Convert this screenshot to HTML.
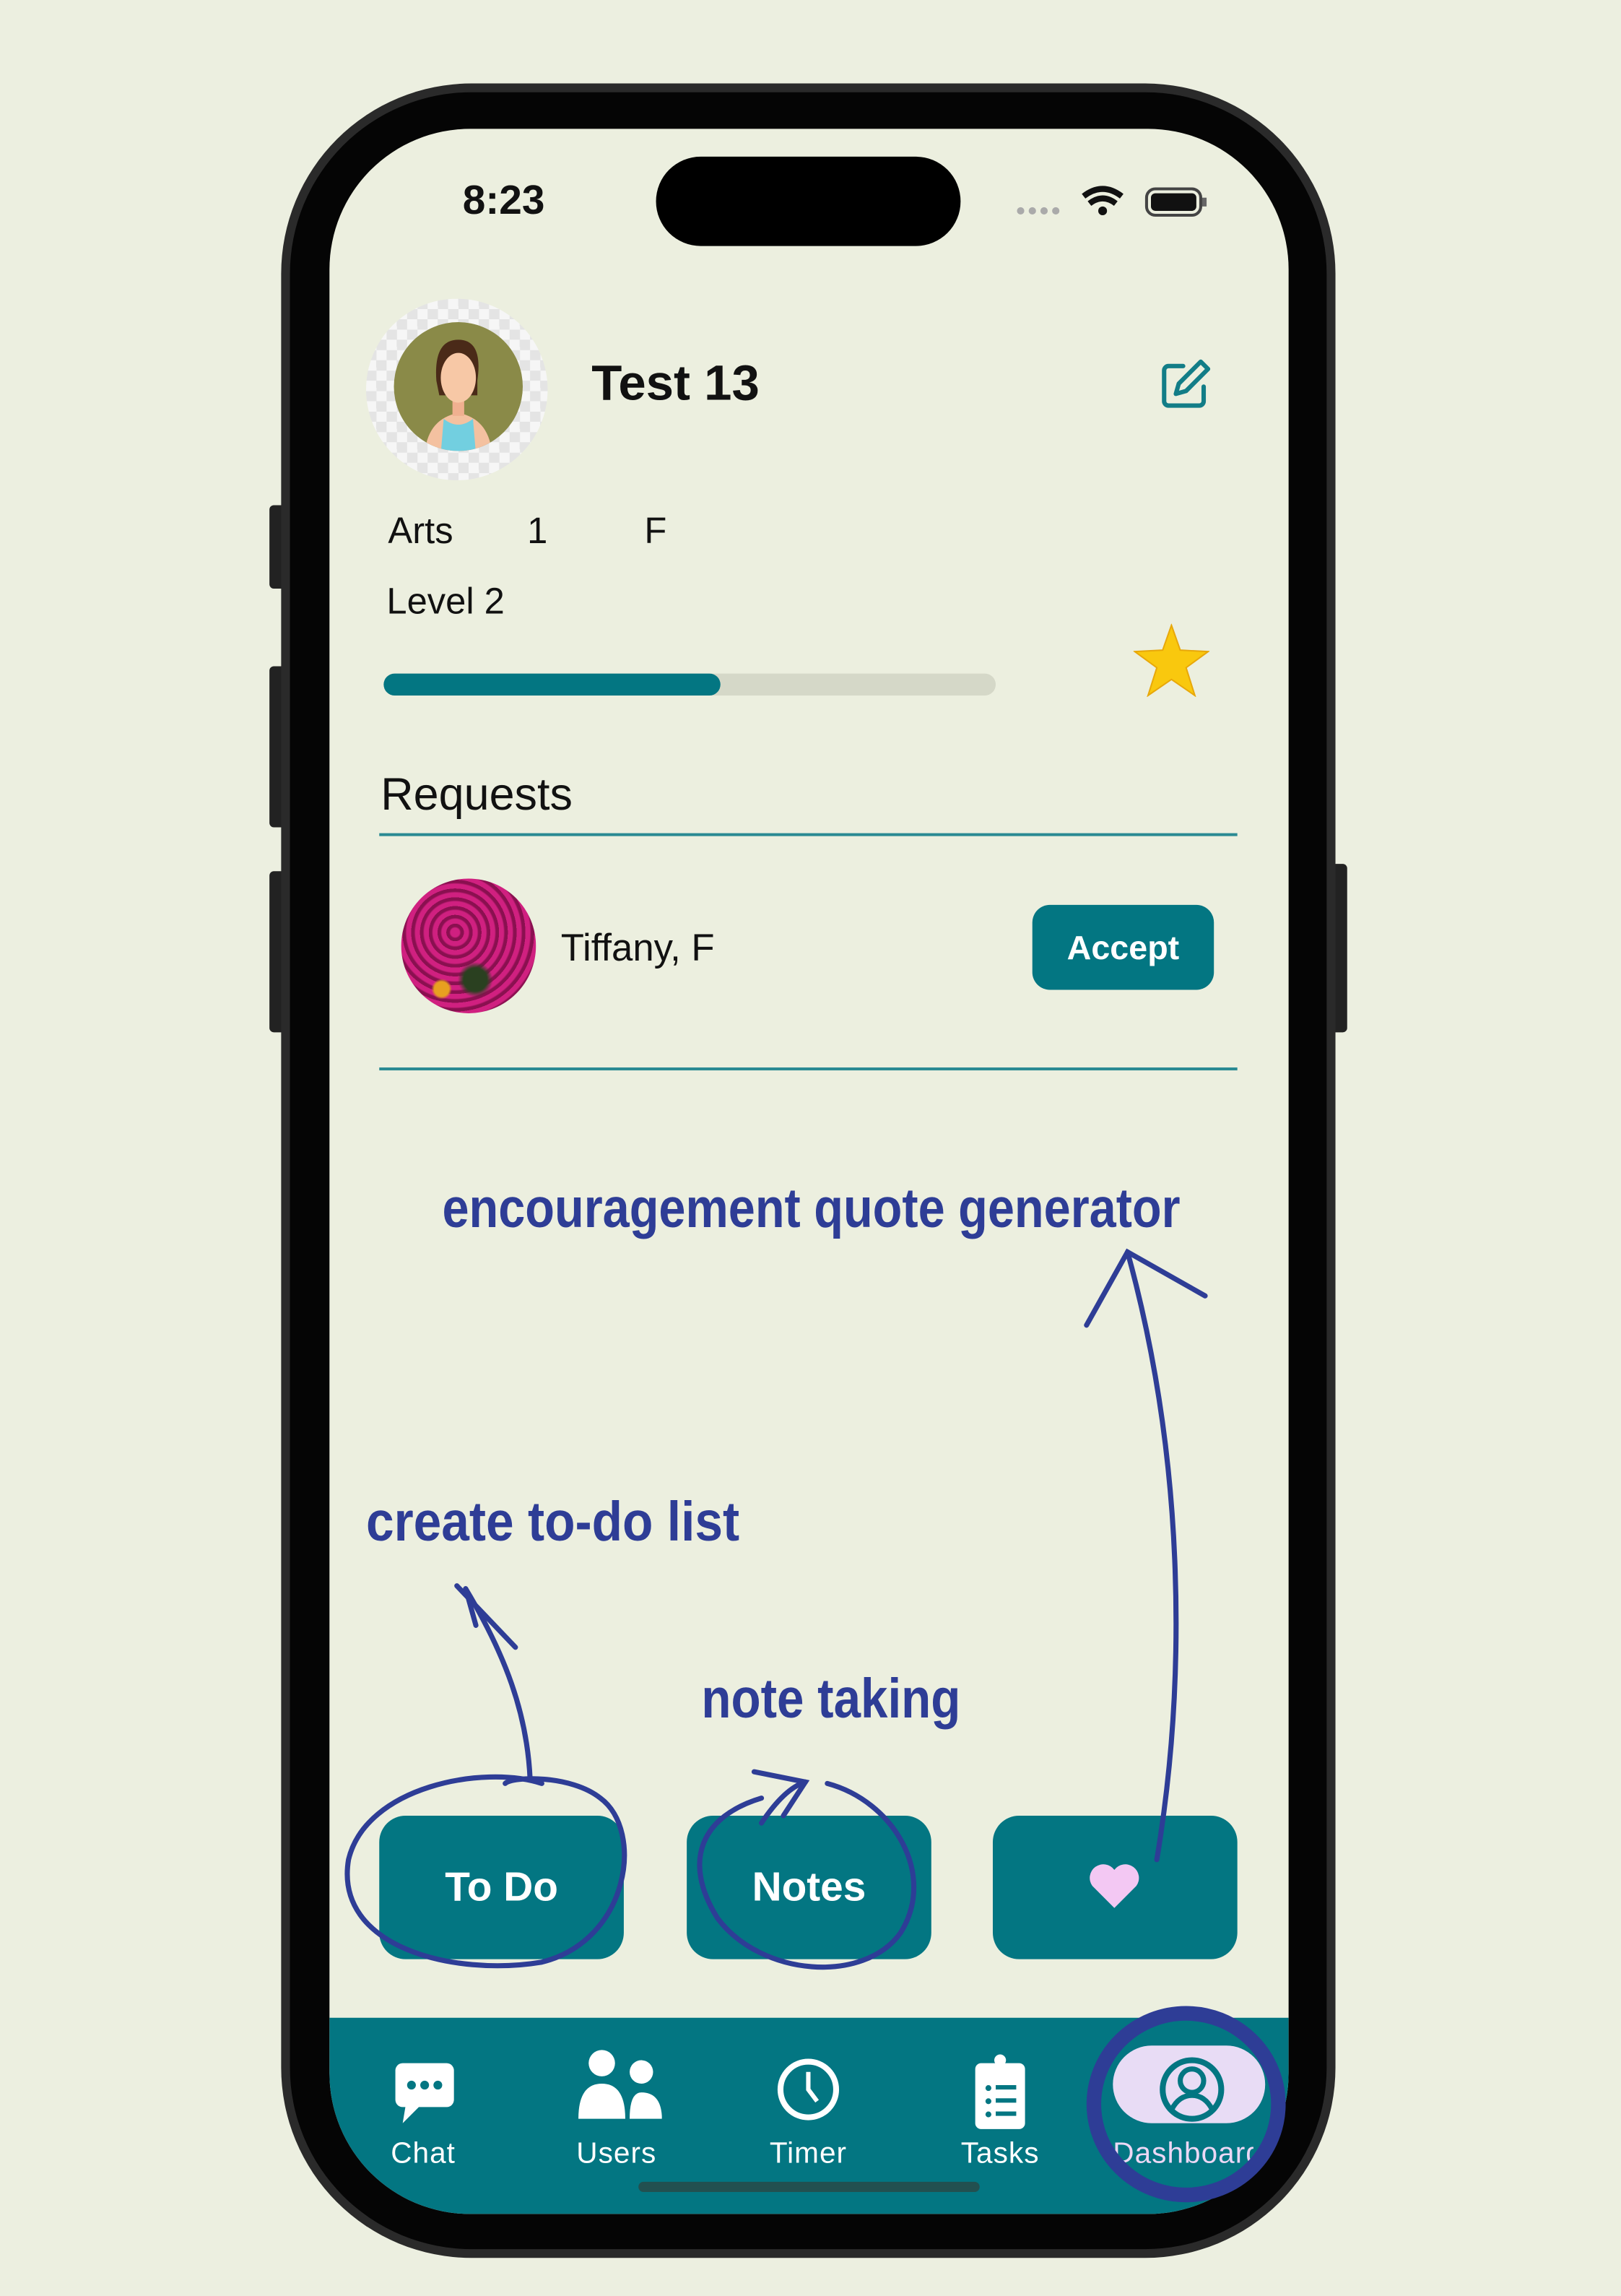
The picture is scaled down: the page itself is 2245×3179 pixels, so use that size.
<!DOCTYPE html>
<html><head><meta charset="utf-8"><style>
html,body{margin:0;padding:0;background:#ecefe0;overflow:hidden}
#w{position:absolute;left:0;top:0;width:1107px;height:1568px;transform-origin:0 0;transform:scale(2.028,2.0274);font-family:"Liberation Sans",sans-serif}
.a{position:absolute}
.t{white-space:nowrap}
</style></head><body><div id="w">
<div class="a" style="left:184px;top:345px;width:12px;height:57px;background:#222;border-radius:3px"></div>
<div class="a" style="left:184px;top:455px;width:12px;height:110px;background:#222;border-radius:3px"></div>
<div class="a" style="left:184px;top:595px;width:12px;height:110px;background:#222;border-radius:3px"></div>
<div class="a" style="left:908px;top:590px;width:12px;height:115px;background:#222;border-radius:3px"></div>
<div class="a" style="left:192px;top:57px;width:720px;height:1485px;background:#2a2a2a;border-radius:130px"></div>
<div class="a" style="left:198px;top:63px;width:708px;height:1473px;background:#050505;border-radius:124px"></div>
<div class="a" style="left:225px;top:88px;width:655px;height:1424px;background:#ecefdf;border-radius:96px;overflow:hidden">
  <div class="a" style="left:0;top:1290px;width:655px;height:134px;background:#037682"></div>
</div>
<div class="a" style="left:448px;top:107px;width:208px;height:61px;background:#000;border-radius:31px"></div>
<div class="a t" style="left:300px;top:121px;width:88px;text-align:center;font-size:28px;font-weight:600;color:#111">8:23</div>
<svg class="a" style="left:690px;top:124px" width="140" height="30" viewBox="0 0 140 30">
<g fill="#aaa"><circle cx="7" cy="20" r="2.5"/><circle cx="15" cy="20" r="2.5"/><circle cx="23" cy="20" r="2.5"/><circle cx="31" cy="20" r="2.5"/></g>
<path d="M50 10 Q63 0 76 10" stroke="#111" stroke-width="4" fill="none"/><path d="M54 15 Q63 8 72 15" stroke="#111" stroke-width="4" fill="none"/><circle cx="63" cy="20" r="3" fill="#111"/>
<rect x="93" y="5" width="37" height="18" rx="6" fill="none" stroke="#444" stroke-width="2"/><rect x="96" y="8" width="31" height="12" rx="3" fill="#111"/><rect x="131" y="11" width="3" height="6" fill="#666"/>
</svg>
<div class="a" style="left:250px;top:204px;width:124px;height:124px;border-radius:50%;background:repeating-conic-gradient(#e4e4e4 0 25%,#f6f6f6 0 50%) 0 0/14px 14px"></div>
<svg class="a" style="left:268px;top:220px" width="90" height="90" viewBox="0 0 90 90">
<circle cx="45" cy="44" r="44" fill="#8a8a48"/>
<clipPath id="c"><circle cx="45" cy="44" r="44"/></clipPath>
<g clip-path="url(#c)"><path d="M22 90 Q24 66 45 62 Q66 66 68 90Z" fill="#f4c1a0"/><path d="M33 90 L35 66 Q45 74 55 66 L57 90Z" fill="#72cfe0"/>
<rect x="41" y="50" width="8" height="14" fill="#f0b090"/>
<path d="M30 40 Q28 12 45 12 Q62 12 58 40 L58 50 L32 50Z" fill="#4a2a18"/>
<ellipse cx="45" cy="38" rx="12" ry="17" fill="#f7c8a6"/></g>
</svg>
<div class="a t" style="left:404px;top:243px;font-size:34px;font-weight:700;color:#111">Test 13</div>
<svg class="a" style="left:792px;top:244px" width="36" height="36" viewBox="0 0 36 36" fill="none" stroke="#127d87" stroke-width="3" stroke-linecap="round" stroke-linejoin="round">
<path d="M16 6H6a3 3 0 0 0-3 3v21a3 3 0 0 0 3 3h21a3 3 0 0 0 3-3V20"/><path d="M28 3l5 5-15 15-7 2 2-7z"/></svg>
<div class="a t" style="left:265px;top:349px;font-size:25px;color:#111">Arts</div>
<div class="a t" style="left:360px;top:349px;font-size:25px;color:#111">1</div>
<div class="a t" style="left:440px;top:349px;font-size:25px;color:#111">F</div>
<div class="a t" style="left:264px;top:397px;font-size:25px;color:#111">Level 2</div>
<div class="a" style="left:262px;top:460px;width:418px;height:15px;background:#d5d8c8;border-radius:8px"></div>
<div class="a" style="left:262px;top:460px;width:230px;height:15px;background:#037682;border-radius:8px"></div>
<svg class="a" style="left:774px;top:426px" width="52" height="50" viewBox="0 0 52 50"><path d="M26 1 L32 18 L51 19 L36 30 L42 49 L26 38 L10 49 L16 30 L1 19 L20 18Z" fill="#f9c80e" stroke="#e8a80a" stroke-width="1"/></svg>
<div class="a t" style="left:260px;top:525px;font-size:31px;color:#111">Requests</div>
<div class="a" style="left:259px;top:569px;width:586px;height:2px;background:#2a8a93"></div>
<div class="a" style="left:274px;top:600px;width:92px;height:92px;border-radius:50%;background:radial-gradient(circle at 30% 82%,#e8a020 0 5px,transparent 7px),radial-gradient(circle at 55% 75%,#2a4020 0 8px,transparent 12px),repeating-radial-gradient(circle at 40% 40%,#d02080 0 3px,#8a1050 4px 6px),#a0105a"></div>
<div class="a t" style="left:383px;top:632px;font-size:26px;color:#111">Tiffany, F</div>
<div class="a t" style="left:705px;top:618px;width:124px;height:58px;background:#037682;border-radius:12px;color:#fff;font-weight:700;font-size:23px;text-align:center;line-height:58px">Accept</div>
<div class="a" style="left:259px;top:729px;width:586px;height:2px;background:#2a8a93"></div>
<div class="a t" style="left:259px;top:1240px;width:167px;height:98px;background:#037682;border-radius:18px;color:#fff;font-weight:700;font-size:28px;text-align:center;line-height:98px">To Do</div>
<div class="a t" style="left:469px;top:1240px;width:167px;height:98px;background:#037682;border-radius:18px;color:#fff;font-weight:700;font-size:28px;text-align:center;line-height:98px">Notes</div>
<div class="a" style="left:678px;top:1240px;width:167px;height:98px;background:#037682;border-radius:18px"></div>
<svg class="a" style="left:743px;top:1272px" width="36" height="32" viewBox="0 0 36 32"><path d="M18 31 L3 16 A8.5 8.5 0 0 1 18 5 A8.5 8.5 0 0 1 33 16Z" fill="#f3c8f3"/></svg>
<div class="a" style="left:760px;top:1397px;width:104px;height:53px;background:#e8dcf5;border-radius:27px"></div>
<svg class="a" style="left:225px;top:1395px" width="655" height="60" viewBox="0 0 655 60">
<g fill="#fff"><rect x="45" y="14" width="40" height="30" rx="5"/><path d="M52 43 L50 55 L62 43Z"/></g>
<g fill="#037682"><circle cx="56" cy="29" r="3"/><circle cx="65" cy="29" r="3"/><circle cx="74" cy="29" r="3"/></g>
<g fill="#fff"><circle cx="186" cy="14" r="9"/><path d="M170 52 Q170 28 186 28 Q202 28 202 52Z"/><circle cx="213" cy="20" r="8"/><path d="M205 52 Q205 34 213 34 Q226 34 227 50 L227 52Z"/></g>
<circle cx="327" cy="32" r="19" fill="none" stroke="#fff" stroke-width="4"/><path d="M327 20V32l6 8" fill="none" stroke="#fff" stroke-width="3"/>
<rect x="441" y="14" width="34" height="45" rx="4" fill="#fff"/><circle cx="458" cy="12" r="4" fill="#fff"/>
<g fill="#037682"><circle cx="450" cy="31" r="2"/><circle cx="450" cy="40" r="2"/><circle cx="450" cy="49" r="2"/><rect x="455" y="29" width="14" height="3"/><rect x="455" y="38" width="14" height="3"/><rect x="455" y="47" width="14" height="3"/></g>
<circle cx="589" cy="32" r="20" fill="none" stroke="#037682" stroke-width="4"/><circle cx="589" cy="26" r="8" fill="none" stroke="#037682" stroke-width="3.5"/><path d="M575 46 Q580 36 589 36 Q598 36 603 46" fill="none" stroke="#037682" stroke-width="3.5"/>
</svg>
<div class="a t" style="left:249px;top:1460px;width:80px;text-align:center;color:#fff;font-size:20px;letter-spacing:0.5px">Chat</div>
<div class="a t" style="left:381px;top:1460px;width:80px;text-align:center;color:#fff;font-size:20px;letter-spacing:0.5px">Users</div>
<div class="a t" style="left:512px;top:1460px;width:80px;text-align:center;color:#fff;font-size:20px;letter-spacing:0.5px">Timer</div>
<div class="a t" style="left:643px;top:1460px;width:80px;text-align:center;color:#fff;font-size:20px;letter-spacing:0.5px">Tasks</div>
<div class="a t" style="left:760px;top:1460px;width:96px;color:#ecd8f5;font-size:20px;overflow:hidden;letter-spacing:0.5px">Dashboard</div>
<div class="a" style="left:436px;top:1490px;width:233px;height:7px;background:#225050;border-radius:4px"></div>
<svg class="a" style="left:0;top:0" width="1107" height="1568" viewBox="0 0 1107 1568">
<g font-family="Liberation Sans Narrow, Liberation Sans, sans-serif" font-weight="700" fill="#2e3d96">
<text x="302" y="838" font-size="38" textLength="504" lengthAdjust="spacingAndGlyphs">encouragement quote generator</text>
<text x="250" y="1052" font-size="38" textLength="255" lengthAdjust="spacingAndGlyphs">create to-do list</text>
<text x="479" y="1173" font-size="38" textLength="177" lengthAdjust="spacingAndGlyphs">note taking</text>
</g>
<g fill="none" stroke="#2e3d96" stroke-width="3.5" stroke-linecap="round">
<path d="M370 1218 C330 1205 250 1220 238 1270 C228 1330 310 1350 370 1340 C430 1325 440 1250 410 1228 C390 1212 350 1213 345 1218"/>
<path d="M362 1215 C360 1170 345 1130 318 1085"/><path d="M312 1083 L352 1125"/><path d="M318 1085 L325 1110"/>
<path d="M565 1218 C610 1230 640 1280 615 1320 C590 1355 520 1350 490 1310 C465 1270 480 1240 520 1228"/>
<path d="M520 1245 C530 1230 540 1220 550 1217"/><path d="M515 1210 L550 1217 L535 1240"/>
<path d="M790 1270 C810 1150 810 1000 770 855"/><path d="M742 905 L770 855 L823 885"/>
</g>
<ellipse cx="810" cy="1437" rx="63" ry="62" fill="none" stroke="#2e3d96" stroke-width="10"/>
</svg>
</div></body></html>
